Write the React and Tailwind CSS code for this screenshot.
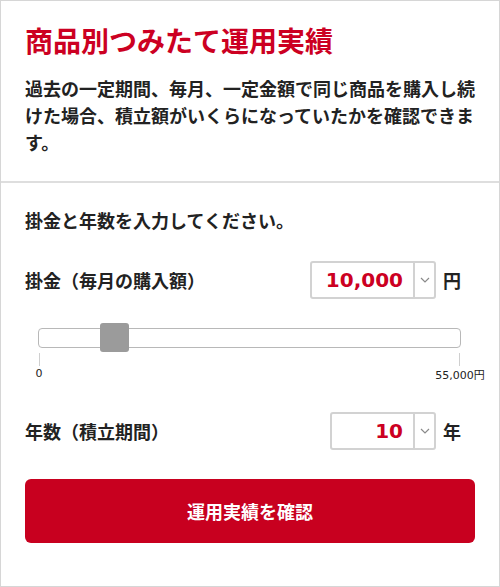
import { useState } from "react";

const jp = { fontFamily: '"Noto Sans CJK JP", "Noto Sans", sans-serif' };
const num = { fontFamily: '"DejaVu Sans", "Liberation Sans", sans-serif' };

function Chevron() {
  return (
    <svg width="10" height="6" viewBox="0 0 10 6" fill="none">
      <path d="M1 1l4 4 4-4" stroke="#8a8a8a" strokeWidth="1.2" />
    </svg>
  );
}

function SelectBox({ value, unit, width }) {
  return (
    <div className="flex items-center">
      <div
        className={`flex h-[38px] items-stretch rounded-[3px] border-2 border-[#d2d2d2] bg-white ${width}`}
      >
        <div
          className="flex flex-1 items-center justify-end pr-[10px] text-[20px] font-bold text-[#cc0022]"
          style={num}
        >
          {value}
        </div>
        <div className="flex w-[21px] items-center justify-center border-l-2 border-[#d2d2d2]">
          <Chevron />
        </div>
      </div>
      <span className="w-[39px] pl-[7px] text-[18px] font-bold text-[#222]">{unit}</span>
    </div>
  );
}

export default function App() {
  const [amount] = useState(10000);

  return (
    <div
      className="flex h-[587px] w-[500px] flex-col border border-[#d6d6d6] bg-white text-[#222]"
      style={jp}
    >
      <section className="border-b-2 border-[#dedede] px-[24px] pb-[25px] pt-[22px]">
        <h1 className="text-[28px] font-bold leading-[34px] text-[#cc0022]">
          商品別つみたて運用実績
        </h1>
        <p className="mt-[18px] text-[18px] font-bold leading-[27px]">
          過去の一定期間、毎月、一定金額で同じ商品を購入し続けた場合、積立額がいくらになっていたかを確認できます。
        </p>
      </section>

      <section className="flex flex-1 flex-col px-[24px] pt-[25px]">
        <p className="text-[18px] font-bold leading-[24px]">掛金と年数を入力してください。</p>

        <div className="mt-[29px] flex items-center justify-between">
          <span className="text-[18px] font-bold">掛金（毎月の購入額）</span>
          <SelectBox value={amount.toLocaleString("en-US")} unit="円" width="w-[126px]" />
        </div>

        <div className="ml-[13px] mr-[14px] mt-[24px]">
          <div className="relative h-[29px]">
            <div className="absolute inset-x-0 top-[5px] h-[20px] rounded-[4px] border border-[#b8b8b8] bg-white" />
            <div className="absolute left-[62px] top-0 h-[29px] w-[29px] rounded-[3px] bg-[#9b9b9b]" />
          </div>
          <div className="flex justify-between px-[1px] pt-[1px]">
            <div className="h-[13px] w-px bg-[#cfcfcf]" />
            <div className="h-[13px] w-px bg-[#cfcfcf]" />
          </div>
          <div className="relative h-[16px] text-[11px] leading-[16px]" style={num}>
            <span className="absolute left-[1px] -translate-x-1/2">0</span>
            <span className="absolute right-[1px] translate-x-1/2" style={jp}>
              <span style={num}>55,000</span>円
            </span>
          </div>
        </div>

        <div className="mt-[30px] flex items-center justify-between">
          <span className="text-[18px] font-bold">年数（積立期間）</span>
          <SelectBox value="10" unit="年" width="w-[106px]" />
        </div>

        <button className="mt-[29px] h-[64px] w-full rounded-[6px] bg-[#c8001f] text-[18px] font-bold text-white">
          運用実績を確認
        </button>
      </section>
    </div>
  );
}
